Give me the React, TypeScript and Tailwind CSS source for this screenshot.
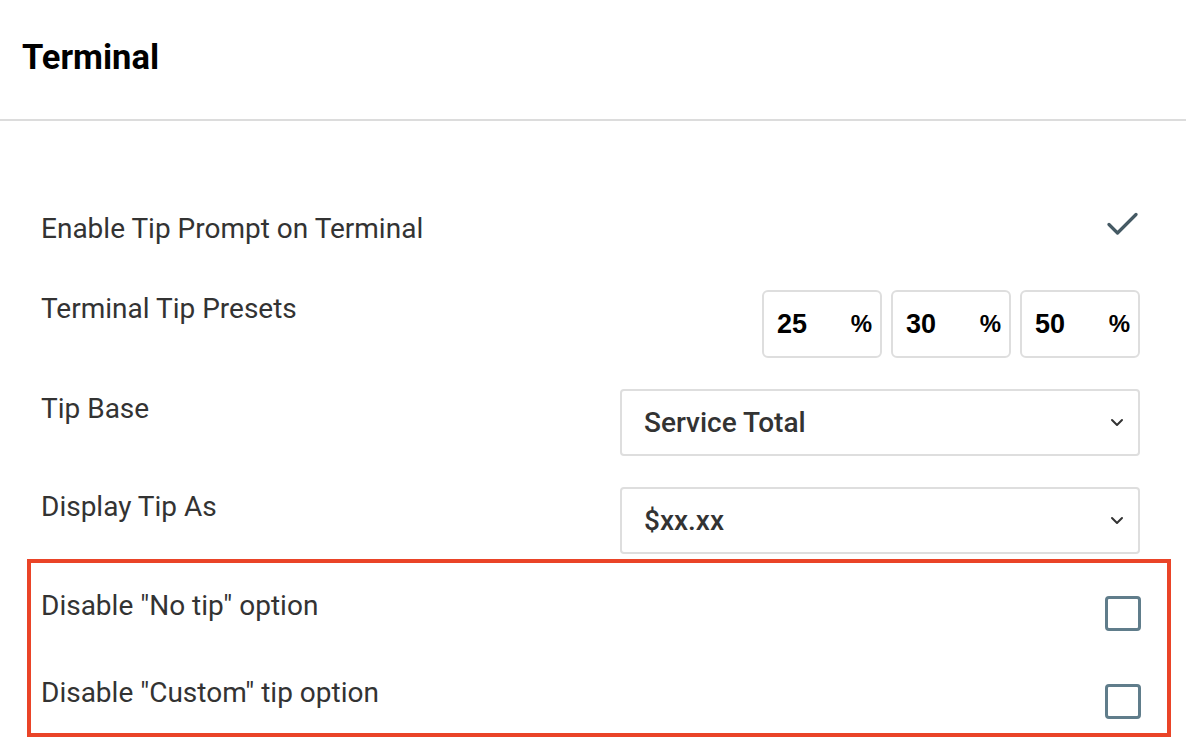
import React from "react";

const Chevron = () => (
  <svg width="14" height="9" viewBox="0 0 14 9" fill="none" stroke="#333" strokeWidth="2" strokeLinecap="round" strokeLinejoin="round">
    <path d="M2 2l5 5 5-5" />
  </svg>
);

const Check = () => (
  <svg width="31" height="23" viewBox="0 0 31 23" fill="none" stroke="#455a64" strokeWidth="3.2" strokeLinecap="round" strokeLinejoin="round">
    <path d="M2 12.5l8.5 8.5L29 2.5" />
  </svg>
);

function Preset({ v }: { v: string }) {
  return (
    <div className="w-[120px] h-[68px] rounded-[6px] border-2 border-[#dedede] flex items-center justify-between pl-[13px] pr-[8px] font-['Liberation_Sans',Arial,sans-serif] font-bold text-[27px] text-black">
      <span>{v}</span>
      <span className="text-[24px]">%</span>
    </div>
  );
}

function Select({ v }: { v: string }) {
  return (
    <div className="w-[520px] h-[67px] rounded-[4px] border-2 border-[#dedede] flex items-center justify-between pl-[22px] pr-[14px]">
      <span className="text-[28px] leading-[34px] font-medium text-[#333]">{v}</span>
      <Chevron />
    </div>
  );
}

export default function App() {
  const label = "text-[28px] leading-[30px] text-[#333]";
  return (
    <div className="w-[1186px] h-[752px] bg-white overflow-hidden font-['Roboto','Noto_Sans',sans-serif]">
      <div className="h-[121px] border-b-2 border-[#dcdcdc] flex items-center pl-[22px] pb-[4px]">
        <h1 className="text-[34.5px] font-bold text-black">Terminal</h1>
      </div>
      <div className="pl-[41px] pr-[46px]">
        <div className="mt-[91px] flex justify-between items-start">
          <span className={`${label} mt-[2px]`}>Enable Tip Prompt on Terminal</span>
          <div className="mr-[2px]">
            <Check />
          </div>
        </div>
        <div className="mt-[46px] flex justify-between items-start">
          <span className={`${label} mt-[4px]`}>Terminal Tip Presets</span>
          <div className="flex gap-[9px]">
            <Preset v="25" />
            <Preset v="30" />
            <Preset v="50" />
          </div>
        </div>
        <div className="mt-[31px] flex justify-between items-start">
          <span className={`${label} mt-[5px]`}>Tip Base</span>
          <Select v="Service Total" />
        </div>
        <div className="mt-[31px] flex justify-between items-start">
          <span className={`${label} mt-[5px]`}>Display Tip As</span>
          <Select v="$xx.xx" />
        </div>
        <div className="mt-[5px] -ml-[14px] -mr-[31px] border-4 border-[#ea4428] pl-[10px] pr-[26px] pt-[28px] pb-[14px]">
          <div className="flex justify-between items-start">
            <span className={label}>Disable "No tip" option</span>
            <div className="mt-[5px] w-[36px] h-[35px] rounded-[4px] border-[3px] border-[#607d8b]" />
          </div>
          <div className="mt-[47px] flex justify-between items-start">
            <span className={label}>Disable "Custom" tip option</span>
            <div className="mt-[6px] w-[36px] h-[35px] rounded-[4px] border-[3px] border-[#607d8b]" />
          </div>
        </div>
      </div>
    </div>
  );
}
